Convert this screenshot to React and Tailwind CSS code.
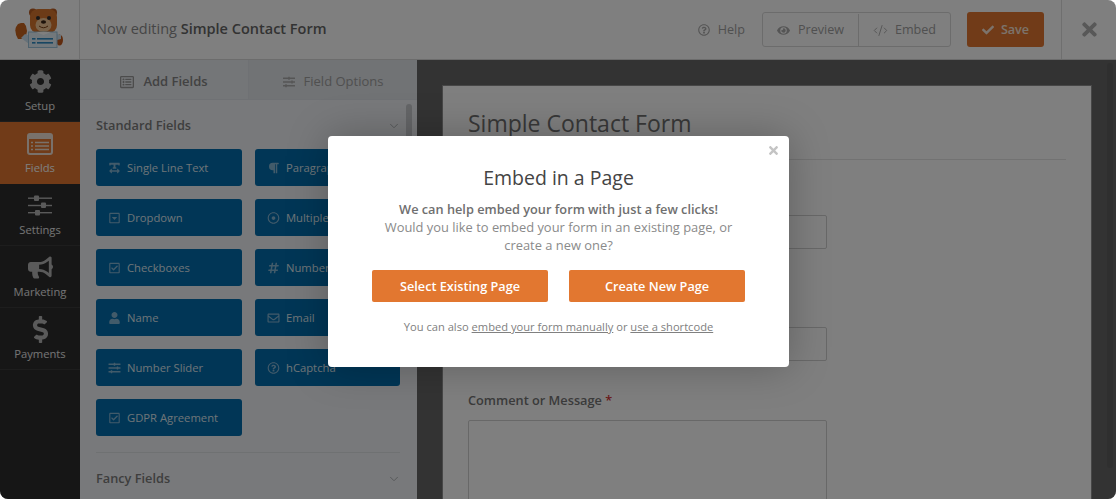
import { ChevronDown, CodeXml } from 'lucide-react';
import {
  FaCog,
  FaSlidersH,
  FaBullhorn,
  FaDollarSign,
  FaRegListAlt,
  FaTextWidth,
  FaParagraph,
  FaRegCaretSquareDown,
  FaRegDotCircle,
  FaRegCheckSquare,
  FaHashtag,
  FaUser,
  FaRegEnvelope,
  FaRegQuestionCircle,
  FaEye,
  FaCheck,
  FaTimes,
} from 'react-icons/fa';

const leftFields = [
  { label: 'Single Line Text', icon: FaTextWidth },
  { label: 'Dropdown', icon: FaRegCaretSquareDown },
  { label: 'Checkboxes', icon: FaRegCheckSquare },
  { label: 'Name', icon: FaUser },
  { label: 'Number Slider', icon: FaSlidersH },
  { label: 'GDPR Agreement', icon: FaRegCheckSquare },
];

const rightFields = [
  { label: 'Paragraph Text', icon: FaParagraph },
  { label: 'Multiple Choice', icon: FaRegDotCircle },
  { label: 'Numbers', icon: FaHashtag },
  { label: 'Email', icon: FaRegEnvelope },
  { label: 'hCaptcha', icon: FaRegQuestionCircle },
];

function FieldsIcon() {
  return (
    <svg width="26" height="22" viewBox="0 0 26 22" fill="none">
      <rect x="1" y="1" width="24" height="20" rx="2" stroke="currentColor" strokeWidth="2" />
      <rect x="1" y="1" width="24" height="5" fill="currentColor" />
      <path d="M4 9.5h2M8 9.5h14M4 13h2M8 13h14M4 16.5h2M8 16.5h14" stroke="currentColor" strokeWidth="1.6" />
    </svg>
  );
}

function SettingsIcon() {
  return (
    <svg width="24" height="21" viewBox="0 0 24 21" fill="currentColor">
      <rect x="0" y="2.5" width="24" height="1.4" />
      <rect x="0" y="9.8" width="24" height="1.4" />
      <rect x="0" y="17" width="24" height="1.4" />
      <rect x="6" y="0.5" width="5" height="5.5" rx="1" />
      <rect x="13" y="7.5" width="5" height="5.5" rx="1" />
      <rect x="7" y="15" width="5" height="5.5" rx="1" />
    </svg>
  );
}

const navItems = [
  { label: 'Setup', icon: <FaCog className="text-[23px]" /> },
  { label: 'Fields', icon: <FieldsIcon />, active: true },
  { label: 'Settings', icon: <SettingsIcon /> },
  { label: 'Marketing', icon: <FaBullhorn className="text-[25px]" /> },
  { label: 'Payments', icon: <FaDollarSign className="text-[27px]" /> },
];

function BearLogo() {
  return (
    <svg width="50" height="40" viewBox="0 0 50 40">
      <circle cx="18" cy="4.5" r="4" fill="#b85c22" />
      <circle cx="38" cy="4.5" r="4" fill="#b85c22" />
      <ellipse cx="44.5" cy="32" rx="3.5" ry="5.5" fill="#c2591d" />
      <path d="M3 31 q-4-7-2-12 l2-3 3-1 3 0 2 3 1 5 -1 5 -3 3z" fill="#c9651f" />
      <path d="M6 30 l8 6 1-8 -5-2z" fill="#cfe3f1" />
      <path d="M42 26 l4 1 0 4 -4 1z" fill="#cfe3f1" />
      <rect x="15" y="1" width="27" height="24" rx="8" fill="#d9762e" />
      <ellipse cx="28.5" cy="17" rx="8" ry="7" fill="#f2c796" />
      <circle cx="23" cy="10" r="2" fill="#2f2f2f" />
      <circle cx="34" cy="10" r="2" fill="#2f2f2f" />
      <ellipse cx="28.5" cy="14" rx="2.6" ry="1.8" fill="#3b2416" />
      <path d="M24 18 q4.5 3.5 9 0" stroke="#7a3d12" strokeWidth="1" fill="none" />
      <rect x="13.5" y="24" width="28.5" height="15.5" fill="#e4f0f8" stroke="#9cc4dc" />
      <path d="M21 24 l7.500 3 7.500-3z" fill="#fff" />
      <rect x="17" y="30" width="3.500" height="1.600" fill="#2e8cc4" />
      <rect x="22" y="30" width="16" height="1.600" fill="#2e8cc4" />
      <rect x="17" y="34" width="3.500" height="1.600" fill="#2e8cc4" />
      <rect x="22" y="34" width="16" height="1.600" fill="#2e8cc4" />
    </svg>
  );
}

function FieldButton({ label, icon: Icon }) {
  return (
    <div className="flex h-[37px] w-full items-center gap-[6px] overflow-hidden whitespace-nowrap rounded-[3px] bg-[#026cac] pl-[12px] pt-[1px] text-[11.25px] font-medium text-[#dde8f0]">
      <Icon className="w-[13px] shrink-0 text-[12px] opacity-60" />
      <span>{label}</span>
    </div>
  );
}

function FormInput({ className }) {
  return <div className={`w-[359px] rounded-[2px] border border-[#d0d0d0] ${className}`} />;
}

export default function App() {
  return (
    <div className="relative h-[499px] w-[1116px] overflow-hidden rounded-[8px] bg-white font-['Open_Sans',sans-serif]">
      <header className="flex h-[60px] items-center border-b border-[#d8d8d8] bg-white">
        <div className="flex h-full w-[80px] shrink-0 items-center justify-center border-r border-[#dedede] pb-[3px]">
          <BearLogo />
        </div>
        <div className="ml-[16px] -mt-[2px] text-[14.5px] text-[#8c8c8c]">
          Now editing <span className="font-semibold text-[#666]">Simple Contact Form</span>
        </div>
        <div className="ml-auto flex items-center text-[12.6px] font-medium text-[#a0a0a0]">
          <FaRegQuestionCircle className="text-[12px] text-[#aaa]" />
          <span className="ml-[8px] pt-[1px]">Help</span>
          <div className="ml-[17px] flex h-[35px] items-center rounded-[3px] border border-[#d8d8d8] pt-[1px]">
            <div className="flex h-full w-[96px] items-center justify-center gap-[8px] border-r border-[#d8d8d8]">
              <FaEye className="text-[13px] text-[#aaa]" />
              <span>Preview</span>
            </div>
            <div className="flex h-full w-[91px] items-center justify-center gap-[7px]">
              <CodeXml size={15} strokeWidth={1.5} className="text-[#aaa]" />
              <span>Embed</span>
            </div>
          </div>
          <div className="ml-[16px] flex h-[35px] w-[77px] items-center justify-center gap-[7px] rounded-[3px] bg-[#e27730] pt-[1px] font-semibold text-[#f8e6d8]">
            <FaCheck className="text-[12px]" />
            <span>Save</span>
          </div>
        </div>
        <div className="ml-[17px] flex h-full w-[55px] items-center justify-center border-l border-[#dedede]">
          <FaTimes className="text-[21px] text-[#b0b0b0]" />
        </div>
      </header>

      <div className="flex h-[439px]">
        <nav className="w-[80px] shrink-0 bg-[#2d2d2d]">
          {navItems.map((item) => (
            <div
              key={item.label}
              className={`flex h-[62px] flex-col items-center border-b border-[#3a3a3a] pt-[8px] text-[11.2px] ${
                item.active ? 'border-[#e27730] bg-[#e27730] text-white' : 'text-[#e8e8e8]'
              }`}
            >
              <div className={`flex h-[27px] items-center ${item.active ? 'text-[#f3e3d6]' : 'text-[#b4b4b4]'}`}>
                {item.icon}
              </div>
              <span className="mt-[3px] leading-[16px]">{item.label}</span>
            </div>
          ))}
        </nav>

        <aside className="w-[337px] shrink-0 overflow-hidden bg-[#f1f3f6]">
          <div className="flex h-[40px] border-b border-[#dfe3e8] text-[13px] font-medium">
            <div className="flex w-[168px] items-center justify-center gap-[9px] bg-[#e9edf1] pt-[4px] font-semibold text-[#858585]">
              <FaRegListAlt className="text-[14px] text-[#999]" />
              Add Fields
            </div>
            <div className="flex flex-1 items-center justify-center gap-[9px] border-l border-[#dfe3e8] bg-[#e2e6ea] pt-[4px] text-[#a0a0a0]">
              <FaSlidersH className="text-[12px] text-[#aaa]" />
              Field Options
            </div>
          </div>
          <div className="relative px-[16px] pr-[17px]">
            <div className="absolute right-[5px] top-[4px] h-[50px] w-[6px] rounded-full bg-[#c8cbce]" />
            <div className="flex h-[49px] items-center justify-between pt-[2px] text-[12.75px] font-semibold text-[#7c7c7c]">
              Standard Fields
              <ChevronDown size={14} strokeWidth={1.5} className="-mr-[1px] text-[#a5a8ab]" />
            </div>
            <div className="flex gap-[13px] border-b border-[#dfe2e5] pb-[16px]">
              <div className="flex w-[146px] shrink-0 flex-col gap-[13px]">
                {leftFields.map((f) => (
                  <FieldButton key={f.label} {...f} />
                ))}
              </div>
              <div className="flex w-[145px] shrink-0 flex-col gap-[13px]">
                {rightFields.map((f) => (
                  <FieldButton key={f.label} {...f} />
                ))}
              </div>
            </div>
            <div className="flex h-[51px] items-center justify-between text-[12.75px] font-semibold text-[#7c7c7c]">
              Fancy Fields
              <ChevronDown size={14} strokeWidth={1.5} className="-mr-[1px] text-[#a5a8ab]" />
            </div>
          </div>
        </aside>

        <main className="relative flex-1 bg-[#666] pl-[25px] pt-[25px]">
          <div className="absolute right-[3px] top-[3px] h-[405px] w-[6px] rounded-full bg-[#5e5e5e]" />
          <div className="h-[430px] w-[650px] border border-[#8f8f8f] bg-white pl-[25px] pr-[25px] pt-[20px]">
            <h1 className="border-b border-[#e4e4e4] pb-[18px] text-[23px] font-medium leading-[35px] text-[#707070]">
              Simple Contact Form
            </h1>
            <FormInput className="mt-[55px] h-[34px]" />
            <FormInput className="mt-[78px] h-[34px]" />
            <div className="mt-[30px] text-[12.75px] font-semibold leading-[18px] text-[#777]">
              Comment or Message <span className="text-[#d63637]">*</span>
            </div>
            <FormInput className="mt-[11px] h-[100px]" />
          </div>
        </main>
      </div>

      {/* dimmed backdrop + modal */}
      <div className="absolute inset-0 bg-black/50 pl-[328px] pt-[136px]">
        <div className="relative h-[231px] w-[461px] rounded-[4px] bg-white pt-[28px] text-center shadow-[0_0_40px_rgba(0,0,0,0.25)]">
          <FaTimes className="absolute right-[9px] top-[8px] text-[13px] text-[#c4c4c4]" />
          <h2 className="text-[19.5px] font-medium leading-[27px] text-[#444]">Embed in a Page</h2>
          <p className="mx-auto mt-[9px] w-[360px] text-[12.9px] leading-[18px] text-[#8a8a8a]">
            <span className="text-[12.75px] font-semibold text-[#6f6f6f]">
              We can help embed your form with just a few clicks!
            </span>
            <br />
            Would you like to embed your form in an existing page, or create a new one?
          </p>
          <div className="mt-[16px] flex justify-center gap-[21px]">
            <div className="flex h-[32px] w-[176px] items-center justify-center rounded-[2px] bg-[#e27730] pt-[2px] text-[12.7px] font-semibold text-white">
              Select Existing Page
            </div>
            <div className="flex h-[32px] w-[176px] items-center justify-center rounded-[2px] bg-[#e27730] pt-[2px] text-[12.7px] font-semibold text-white">
              Create New Page
            </div>
          </div>
          <p className="mt-[16px] text-[11.15px] leading-[18px] text-[#808080]">
            You can also <span className="underline">embed your form manually</span> or{' '}
            <span className="underline">use a shortcode</span>
          </p>
        </div>
      </div>
    </div>
  );
}
